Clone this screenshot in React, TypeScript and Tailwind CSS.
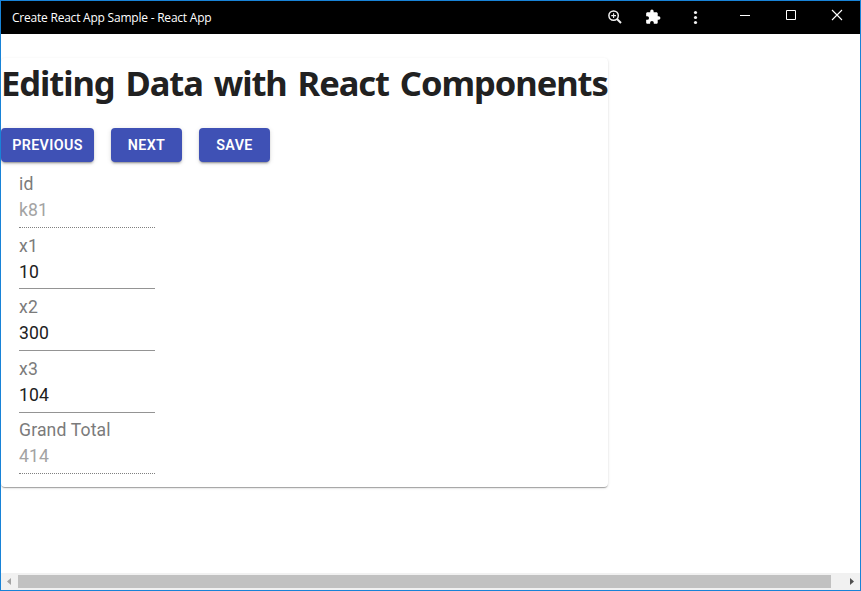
import React from "react";

type FieldProps = { label: string; value: string; disabled?: boolean; height: string };

const fields: FieldProps[] = [
  { label: "id", value: "k81", disabled: true, height: "h-[62px] pb-[4px]" },
  { label: "x1", value: "10", height: "h-[61px] pb-[3px]" },
  { label: "x2", value: "300", height: "h-[62px] pb-[4px]" },
  { label: "x3", value: "104", height: "h-[62px] pb-[4px]" },
  { label: "Grand Total", value: "414", disabled: true, height: "h-[61px] pb-[4px]" },
];

function Field({ label, value, disabled, height }: FieldProps) {
  return (
    <div
      className={`flex w-[136px] flex-col justify-end border-b font-[Roboto,sans-serif] text-[17.6px] leading-[26px] tracking-[0.15px] ${height} ${
        disabled ? "border-dotted border-[#808080]" : "border-solid border-[#949494]"
      }`}
    >
      <div className="text-[#7b7b7b]">{label}</div>
      <div className={disabled ? "text-[#a3a3a3]" : "text-[#212121]"}>{value}</div>
    </div>
  );
}

function ActionButton({ label, width }: { label: string; width: string }) {
  return (
    <button
      className={`h-[34px] rounded-[4px] bg-[#3f51b5] text-center font-[Roboto,sans-serif] text-[14.3px] leading-[34px] font-semibold tracking-[0.35px] text-white shadow-[0_3px_1px_-2px_rgba(0,0,0,0.2),0_2px_2px_0_rgba(0,0,0,0.14),0_1px_5px_0_rgba(0,0,0,0.12)] ${width}`}
    >
      {label}
    </button>
  );
}

function TitleBar() {
  return (
    <header className="flex h-[33px] shrink-0 items-center justify-between bg-black pl-[11px] text-white">
      <span className="font-['Open_Sans',sans-serif] text-[12px] tracking-[-0.22px] whitespace-nowrap">
        Create React App Sample - React App
      </span>
      <svg width="260" height="33" viewBox="600 1 260 33" fill="none">
        <g stroke="#f1f1f1" strokeWidth="1.5">
          <circle cx="613.6" cy="15.6" r="4.7" />
          <path d="M617 19L621 23" strokeWidth="1.9" />
          <path d="M611.2 15.6H616M613.6 13.2V18" strokeWidth="1.1" />
        </g>
        <g transform="translate(644.8 8.8) scale(0.68)">
          <path
            fill="#fff"
            d="M20.5 11H19V7c0-1.1-.9-2-2-2h-4V3.5a2.5 2.5 0 0 0-5 0V5H4c-1.1 0-2 .9-2 2v3.8h1.5a2.7 2.7 0 0 1 0 5.4H2V20c0 1.1.9 2 2 2h3.8v-1.5a2.7 2.7 0 0 1 5.4 0V22H17c1.1 0 2-.9 2-2v-4h1.5a2.5 2.5 0 0 0 0-5z"
          />
        </g>
        <g fill="#f1f1f1">
          <circle cx="695.5" cy="12.5" r="1.6" />
          <circle cx="695.5" cy="17.5" r="1.6" />
          <circle cx="695.5" cy="22.5" r="1.6" />
        </g>
        <g stroke="#fff" strokeWidth="1">
          <path d="M740 15.5H750" />
          <path d="M786.5 10.5H795.5V19.5H786.5Z" />
          <path d="M832 10L842 20M842 10L832 20" strokeWidth="1.1" />
        </g>
      </svg>
    </header>
  );
}

function ScrollBar() {
  return (
    <div className="flex h-[17px] shrink-0 items-center bg-[#f1f1f1]">
      <svg width="17" height="17" viewBox="0 0 17 17">
        <path d="M10 5V12L6 8.5Z" fill="#a3a3a3" />
      </svg>
      <div className="h-[13px] w-[813px] bg-[#c1c1c1]" />
      <svg className="ml-auto" width="17" height="17" viewBox="0 0 17 17">
        <path d="M7 5V12L11 8.5Z" fill="#505050" />
      </svg>
    </div>
  );
}

export default function App() {
  return (
    <div className="flex h-[591px] w-[861px] flex-col overflow-hidden border border-[#1883d7] bg-white">
      <TitleBar />
      <main className="min-h-0 flex-1 pt-[24px]">
        <section className="flex h-[429px] w-[607px] flex-col rounded-[4px] bg-white shadow-[0_2px_1px_-1px_rgba(0,0,0,0.2),0_1px_1px_0_rgba(0,0,0,0.14),0_1px_3px_0_rgba(0,0,0,0.12)]">
          <h1 className="h-[70px] font-['Noto_Sans',sans-serif] text-[34.5px] leading-[50px] font-bold tracking-[-1.06px] [word-spacing:3px] whitespace-nowrap text-[#212121]">
            Editing Data with React Components
          </h1>
          <div className="flex gap-[17px]">
            <ActionButton label="PREVIOUS" width="w-[93px]" />
            <ActionButton label="NEXT" width="w-[71px]" />
            <ActionButton label="SAVE" width="w-[71px]" />
          </div>
          <div className="mt-[4px] flex flex-col pl-[18px]">
            {fields.map((field) => (
              <Field key={field.label} {...field} />
            ))}
          </div>
        </section>
      </main>
      <ScrollBar />
    </div>
  );
}
